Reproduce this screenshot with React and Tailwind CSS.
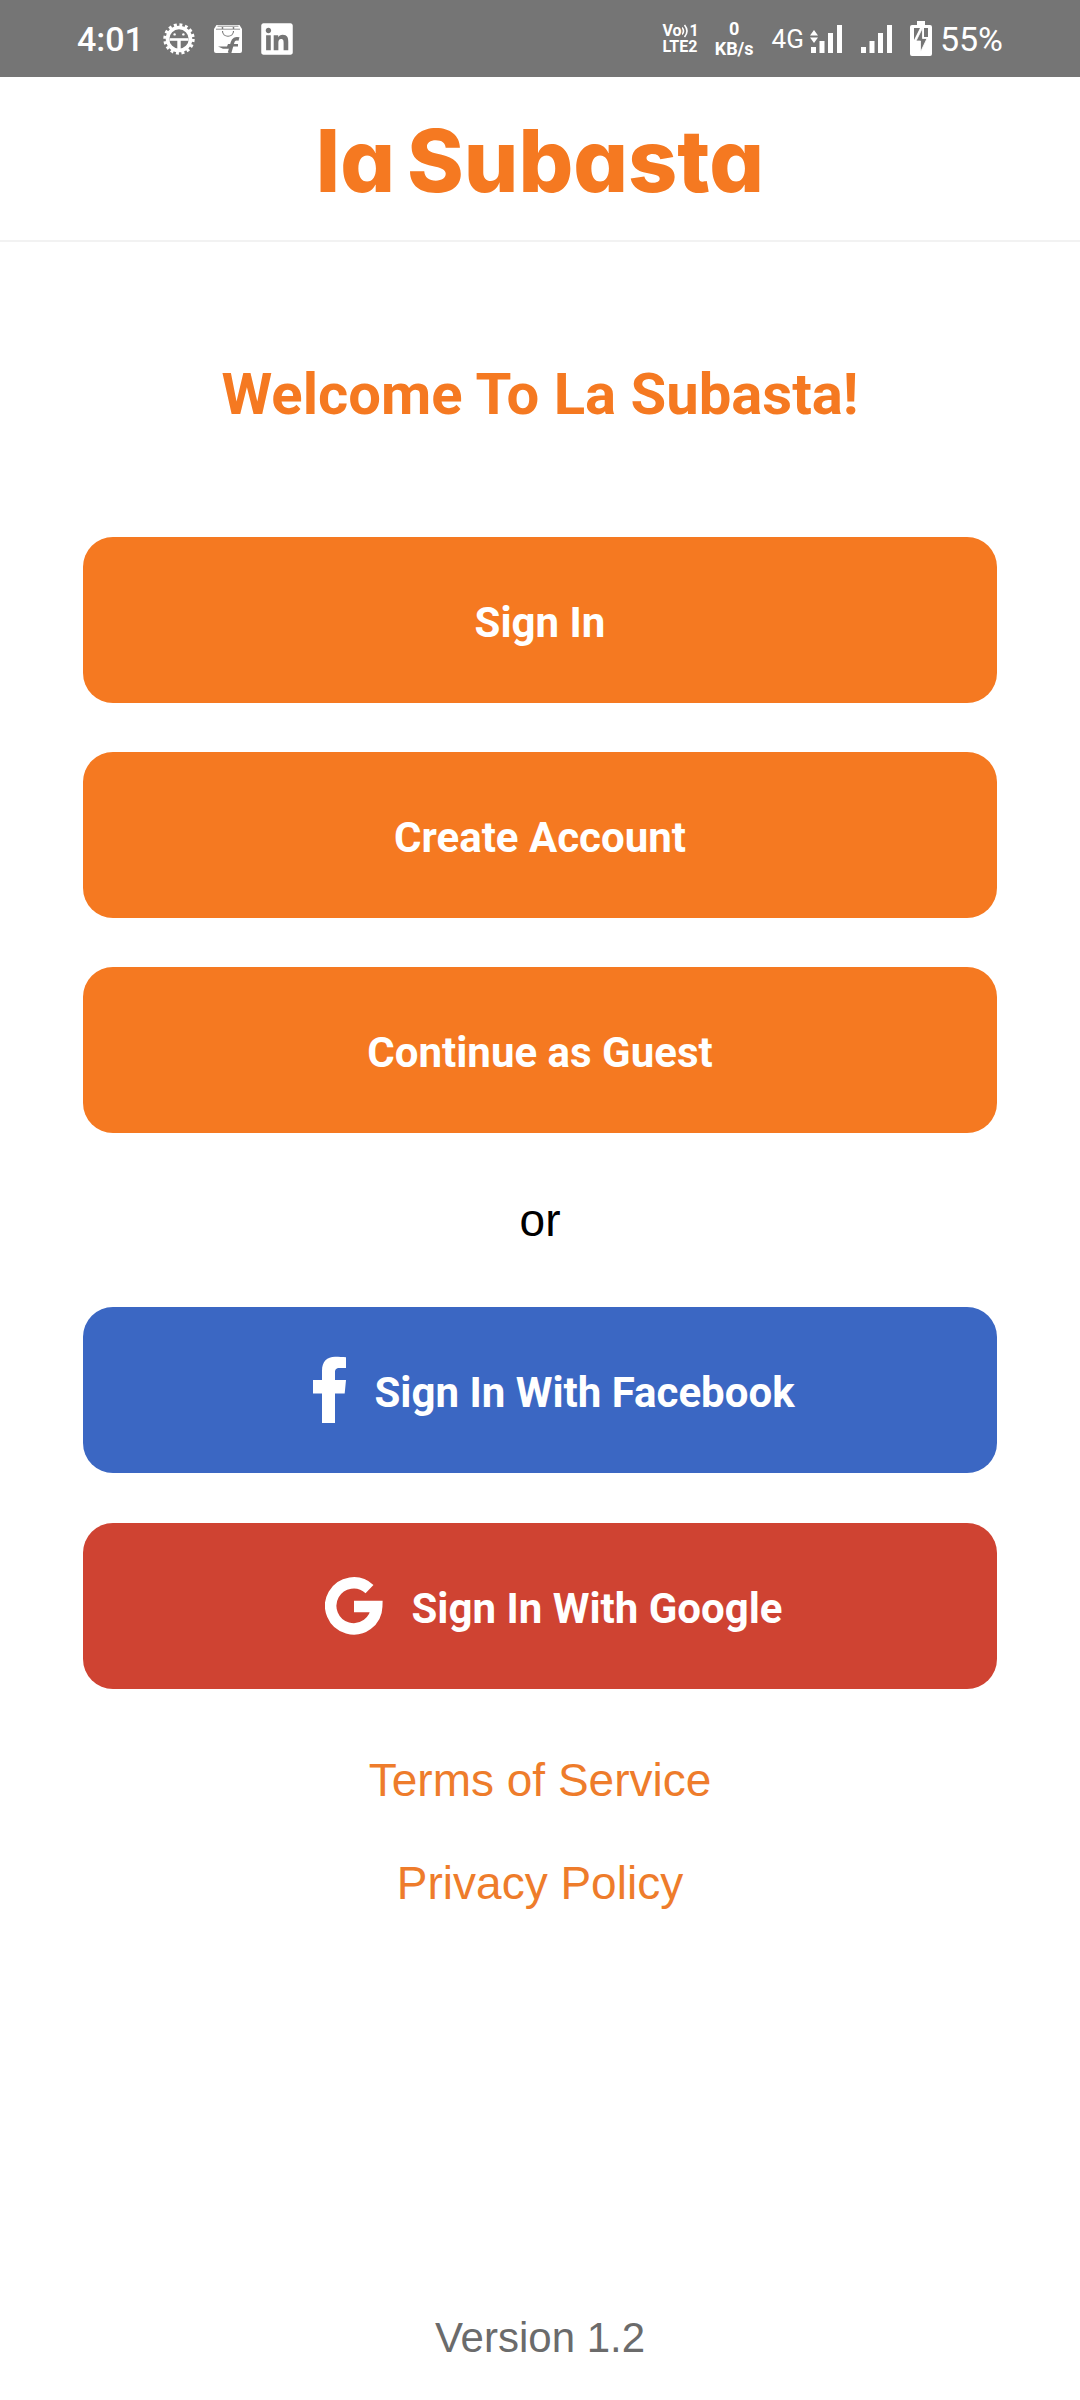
import React from "react";
import { FaLinkedin } from "react-icons/fa";

const accountActions = ["Sign In", "Create Account", "Continue as Guest"];

const GearIcon = () => (
  <svg viewBox="0 0 32 32" className="w-8 h-8" fill="none">
    <circle cx="16" cy="16" r="14" stroke="#fff" strokeWidth="3.4" strokeDasharray="2.9 2.598" />
    <circle cx="16" cy="16" r="11.5" stroke="#fff" strokeWidth="3.6" />
    <path d="M6.5 16.5h19" stroke="#fff" strokeWidth="2.6" />
    <path d="M16 17v11" stroke="#fff" strokeWidth="3.4" />
    <circle cx="11.6" cy="11.4" r="1.2" fill="#fff" />
    <circle cx="20.4" cy="11.4" r="1.2" fill="#fff" />
  </svg>
);

const BagIcon = () => (
  <svg viewBox="0 0 28 28" className="w-7 h-7" fill="none">
    <path d="M2.5 0h23L28 4v22a2 2 0 0 1-2 2H2a2 2 0 0 1-2-2V4z" fill="#fff" />
    <path d="M2 4.2h24M3.5 1.2h21" stroke="#757575" strokeWidth="0.8" />
    <circle cx="8.5" cy="3" r="0.9" fill="#757575" />
    <circle cx="19.5" cy="3" r="0.9" fill="#757575" />
    <path d="M8.5 6c0 7 11 7 11 0" stroke="#757575" strokeWidth="1.1" />
    <path d="M15.5 28l3-10.500c.8-3 3-4.500 6.500-3.500" stroke="#757575" strokeWidth="3.600" />
    <path d="M4 21.500h9l1-2.500h10v2.500h-7l-1 2.300H9z" fill="#757575" />
  </svg>
);

const SignalIcon = ({ data }) => (
  <svg viewBox="0 0 32 30" className="w-8 h-[30px]" fill="#fff">
    <path d="M1 23h5v6H1zM9.500 17h5v12h-5zM18 9h5v20h-5zM27 1h5v28h-5z" />
    {data && <path d="M0 11.500L4 6l4 5.500zM0 13.500h8L4 19z" />}
  </svg>
);

const BatteryIcon = () => (
  <svg viewBox="0 0 22 36" className="w-[22px] h-9">
    <path d="M7 0h8v4h5a2 2 0 0 1 2 2v27a2 2 0 0 1-2 2H2a2 2 0 0 1-2-2V6a2 2 0 0 1 2-2h5z" fill="#fff" />
    <path d="M4 7h6L4 19zM14 7h4v9h-4z" fill="#757575" />
    <path d="M12.500 7L6 20h4.500v11L17 17.500h-4.500z" fill="#757575" stroke="#fff" strokeWidth="0.800" />
  </svg>
);

const FacebookIcon = () => (
  <svg viewBox="0 0 33 68" className="w-[33px] h-[68px]" fill="#fff">
    <path d="M9 67V37.500H0V24h9V15C9 5.500 14 .8 22 .8c4 0 8 .2 11 .5V12h-6.500C23 12 22 13.500 22 16.500V24h11l-1.300 13.500H22V67z" />
  </svg>
);

const GoogleIcon = () => (
  <svg viewBox="0 0 58 58" className="w-[58px] h-[58px]" fill="none">
    <path d="M44.500 12.100A23 23 0 1 0 51.700 29.500H29" stroke="#fff" strokeWidth="11.500" strokeLinejoin="miter" />
  </svg>
);

const StatusBar = () => (
  <div className="h-[77px] bg-[#757575] text-white flex items-center justify-between px-[77px]">
    <div className="flex items-center gap-[19px]">
      <span className="text-[34px] leading-10 font-medium">4:01</span>
      <GearIcon />
      <BagIcon />
      <FaLinkedin className="w-8 h-9" />
    </div>
    <div className="flex items-center">
      <div className="text-[16px] leading-4 font-bold">
        <div className="flex items-center">
          <span>Vo</span>
          <svg viewBox="0 0 8 14" className="w-2 h-[14px]" fill="none" stroke="#fff" strokeWidth="1.600">
            <path d="M0 3.500q3 3.500 0 7M2.500 1q5 6 0 12" />
          </svg>
          <span>1</span>
        </div>
        <div>LTE2</div>
      </div>
      <div className="text-[18px] leading-5 font-bold text-center ml-4">
        <div>0</div>
        <div>KB/s</div>
      </div>
      <span className="text-[26px] leading-8 ml-[18px]">4G</span>
      <div className="flex items-center gap-[18px] ml-1.5">
        <SignalIcon data />
        <SignalIcon />
        <BatteryIcon />
      </div>
      <span className="text-[34px] leading-10 ml-2">55%</span>
    </div>
  </div>
);

const SocialButton = ({ label, icon, color }) => (
  <button type="button" className={`w-full h-[166px] rounded-[30px] text-white text-[42px] leading-[48px] font-bold flex items-center justify-center ${color}`}>
    <span className="px-7">{icon}</span>
    <span className="pt-1.5">{label}</span>
  </button>
);

const App = () => {
  return (
    <div className="min-h-screen bg-white flex flex-col font-['Roboto',sans-serif]">
      <StatusBar />
      <header className="h-[165px] border-b-2 border-[#f2f2f2] flex justify-center items-center">
        <div className="flex gap-3 pt-1 text-[86px] leading-[120px] font-extrabold text-[#f57921] font-['Inter',sans-serif] [font-feature-settings:'cv11']">
          <span>la</span>
          <span>Subasta</span>
        </div>
      </header>

      <main className="flex-1 flex flex-col px-[83px] pb-[38px] text-center">
        <h1 className="mt-[120px] mb-[111px] text-[58px] leading-16 font-bold text-[#f57921]">
          Welcome To La Subasta!
        </h1>

        <div className="flex flex-col gap-[49px]">
          {accountActions.map((label) => (
            <button
              key={label}
              type="button"
              className="w-full h-[166px] pt-1.5 rounded-[30px] bg-[#f57921] text-white text-[42px] leading-[48px] font-bold"
            >
              {label}
            </button>
          ))}
        </div>

        <p className="my-[60px] text-[46px] leading-[54px] text-black font-['Liberation_Sans',sans-serif]">or</p>

        <div className="flex flex-col gap-[50px]">
          <SocialButton label="Sign In With Facebook" color="bg-[#3b67c3]" icon={<FacebookIcon />} />
          <SocialButton label="Sign In With Google" color="bg-[#cf4332]" icon={<GoogleIcon />} />
        </div>

        <nav className="mt-16 flex flex-col items-center gap-[49px] text-[46px] leading-[54px] text-[#ee7c2b] font-['Liberation_Sans',sans-serif]">
          <a href="#terms">Terms of Service</a>
          <a href="#privacy">Privacy Policy</a>
        </nav>

        <p className="mt-auto text-[42px] leading-[48px] text-[#6b6b6b] font-['Liberation_Sans',sans-serif]">
          Version 1.2
        </p>
      </main>
    </div>
  );
};

export default App;
